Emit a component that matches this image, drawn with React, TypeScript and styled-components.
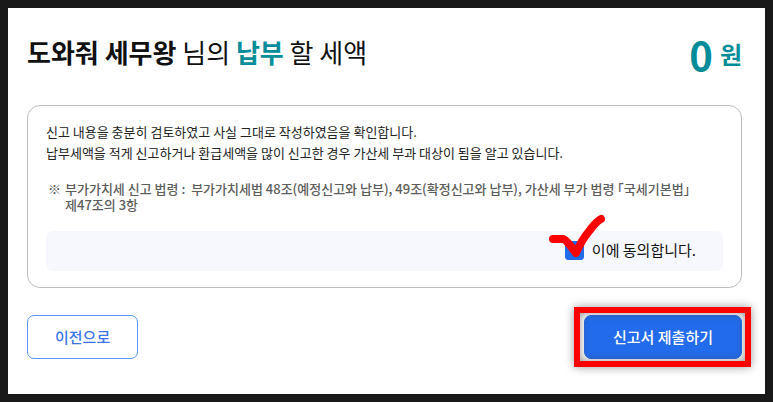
import React, { useState } from "react";
import styled, { createGlobalStyle } from "styled-components";

const GlobalStyle = createGlobalStyle`
  *, *::before, *::after { box-sizing: border-box; }
  html, body { height: 100%; }
  #root { min-height: 100%; display: flex; }
  body {
    margin: 0;
    background: #191919;
    color: #111;
    font-family: "Noto Sans CJK KR", sans-serif;
    word-break: keep-all;
  }
`;

const Page = styled.main`
  flex: 1;
  margin: 8px;
  padding: 24px 23px 35px 19px;
  background: #fff;
`;

const Header = styled.header`
  display: flex;
  justify-content: space-between;
  align-items: flex-start;
  height: 73px;
`;

const Title = styled.h1`
  margin: 0;
  font-size: 26px;
  line-height: 40px;
  font-weight: 400;
`;

const Accent = styled.strong`
  color: #038c99;
  font-weight: 700;
`;

const Amount = styled.p`
  display: flex;
  align-items: center;
  gap: 7px;
  margin: 0;
  color: #038c99;
  font-size: 24px;
  line-height: 44px;
  font-weight: 700;
`;

const Figure = styled.span`
  font-size: 40px;
`;

const Notice = styled.section`
  padding: 15px 18px 16px;
  border: 1px solid #bcbcbc;
  border-radius: 13px;
`;

const Statement = styled.p`
  margin: 0;
  color: #222;
  font-size: 13px;
  line-height: 21px;
`;

const Law = styled.div`
  display: flex;
  gap: 4px;
  margin: 18px 0 18px 2px;
  color: #5c5c5c;
  font-size: 13px;
  line-height: 16px;
  font-weight: 500;
  font-feature-settings: "halt";
`;

const AgreeBar = styled.div`
  display: flex;
  justify-content: flex-end;
  padding: 0 27px 2px;
  border-radius: 7px;
  background: #f7f8fe;
`;

const AgreeLabel = styled.label`
  position: relative;
  display: flex;
  align-items: center;
  gap: 8px;
  height: 38px;
  font-size: 15px;
  line-height: 22px;
`;

const Checkbox = styled.input`
  appearance: none;
  width: 19px;
  height: 19px;
  margin: 0;
  border: 1px solid #226bea;
  border-radius: 3px;
  background: #fff;
  &:checked { background: #226bea; }
`;

const CheckMark = styled.svg`
  position: absolute;
  left: -18px;
  top: -19px;
  width: 60px;
  height: 46px;
  pointer-events: none;
`;

const Actions = styled.div`
  display: flex;
  justify-content: space-between;
  margin-top: 27px;
`;

const Button = styled.button<{ $primary?: boolean }>`
  height: 44px;
  padding: 0 ${(p) => (p.$primary ? 28 : 27)}px;
  border: 1px solid ${(p) => (p.$primary ? "#226bea" : "#5a93f7")};
  border-radius: 7px;
  background: ${(p) => (p.$primary ? "#226bea" : "#fff")};
  color: ${(p) => (p.$primary ? "#fff" : "#3b76ee")};
  font: 500 15px/22px "Noto Sans CJK KR", sans-serif;
`;

const Highlight = styled.div`
  position: relative;
  display: flex;
  &::after {
    content: "";
    position: absolute;
    inset: -8px -9px -8px -10px;
    border: 6px solid #fe0000;
    box-shadow: 0 0 9px rgba(0, 0, 0, 0.4), inset 0 0 9px rgba(70, 70, 70, 0.6);
    pointer-events: none;
  }
`;

export default function App() {
  const [agreed, setAgreed] = useState(true);
  return (
    <>
      <GlobalStyle />
      <Page>
        <Header>
          <Title>
            <strong>도와줘 세무왕</strong> 님의 <Accent>납부</Accent> 할 세액
          </Title>
          <Amount>
            <Figure>0</Figure>원
          </Amount>
        </Header>
        <Notice>
          <Statement>신고 내용을 충분히 검토하였고 사실 그대로 작성하였음을 확인합니다.</Statement>
          <Statement>
            납부세액을 적게 신고하거나 환급세액을 많이 신고한 경우 가산세 부과 대상이 됨을 알고 있습니다.
          </Statement>
          <Law>
            <span>※</span>
            <span>
              부가가치세 신고 법령 :&nbsp; 부가가치세법 48조(예정신고와 납부), 49조(확정신고와 납부), 가산세 부가 법령
              「국세기본법」 제47조의 3항
            </span>
          </Law>
          <AgreeBar>
            <AgreeLabel>
              <Checkbox type="checkbox" checked={agreed} onChange={(e) => setAgreed(e.target.checked)} />
              이에 동의합니다.
              {agreed && (
                <CheckMark viewBox="0 0 60 46" aria-hidden="true">
                  <path
                    d="M6 27H16C18 27 20 30 22 32L29 41C32 34 38 24 43 18C46 14 50 9 54 7"
                    fill="none"
                    stroke="#fe0000"
                    strokeWidth="8"
                    strokeLinecap="round"
                    strokeLinejoin="round"
                  />
                </CheckMark>
              )}
            </AgreeLabel>
          </AgreeBar>
        </Notice>
        <Actions>
          <Button type="button">이전으로</Button>
          <Highlight>
            <Button type="button" $primary>
              신고서 제출하기
            </Button>
          </Highlight>
        </Actions>
      </Page>
    </>
  );
}
